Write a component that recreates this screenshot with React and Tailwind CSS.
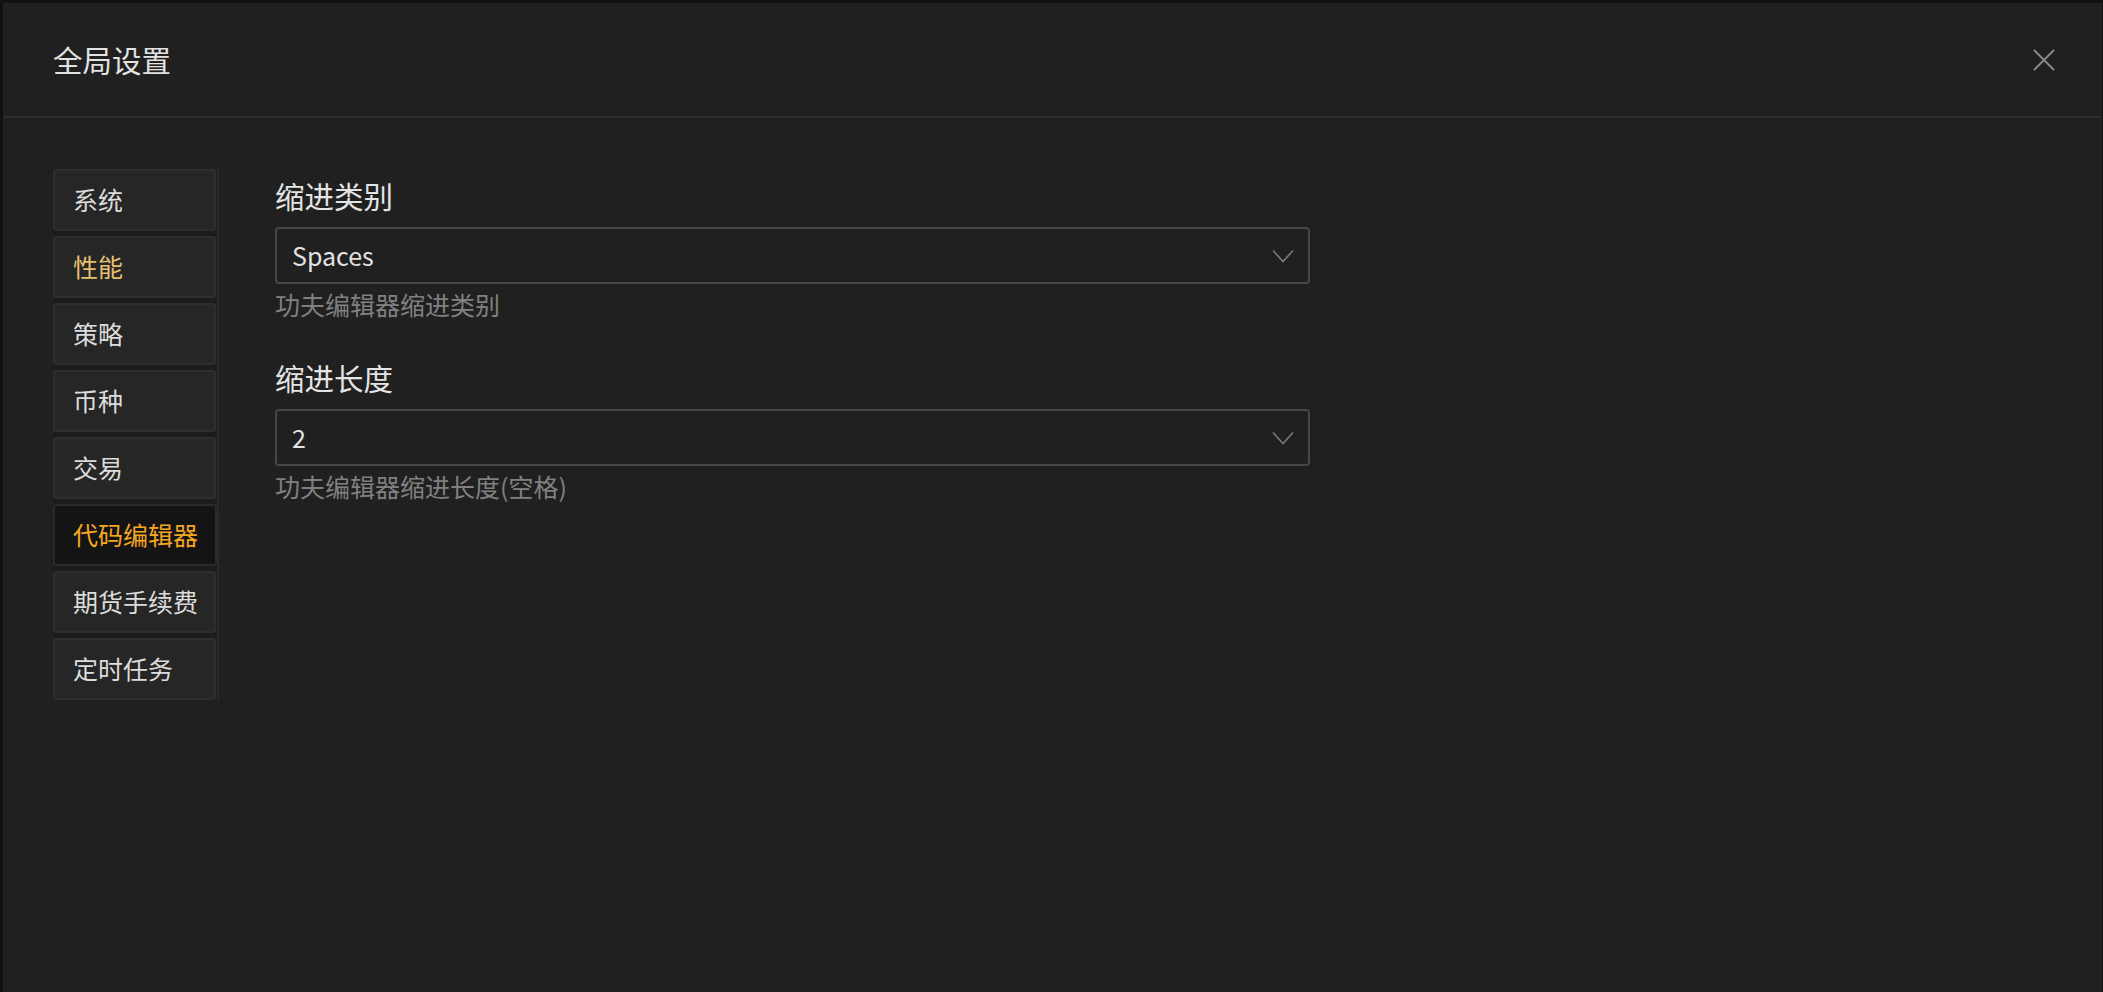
import { useState } from 'react';

const tabs = ['系统', '性能', '策略', '币种', '交易', '代码编辑器', '期货手续费', '定时任务'];

function Chevron() {
  return (
    <svg width="22" height="14" viewBox="0 0 22 14" fill="none" className="shrink-0">
      <path d="M1 1.5 L11 12.5 L21 1.5" stroke="#7a7a7a" strokeWidth="1.6" />
    </svg>
  );
}

function SelectField({ label, value, hint }) {
  return (
    <div className="flex flex-col">
      <div className="h-[40px] leading-[40px] text-[29.5px] text-[#e4e4e4]">{label}</div>
      <div className="mt-[12px] w-[1035px] h-[57px] border-2 border-[#474747] rounded-[4px] flex items-center justify-between pl-[15px] pr-[14px]">
        <span className="text-[25px] text-[#e2e2e2]">{value}</span>
        <Chevron />
      </div>
      <div className="mt-[4px] h-[32px] leading-[32px] text-[25px] text-[#808080]">{hint}</div>
    </div>
  );
}

export default function App() {
  const [active, setActive] = useState(5);

  return (
    <div
      className="w-[2103px] h-[992px] bg-[#111111] overflow-hidden pl-[3px] pt-[3px] pr-[1px]"
      style={{ fontFamily: '"Noto Sans CJK SC", "Noto Sans", sans-serif' }}
    >
      <div className="h-[989px] bg-[#202020] flex flex-col">
        {/* Header */}
        <div className="h-[113px] flex items-center justify-between pl-[50px] pr-[46px] border-b-2 border-[#2d2d2d] box-content">
          <span className="text-[29.5px] text-[#e2e2e2] leading-none">全局设置</span>
          <svg width="24" height="24" viewBox="0 0 24 24" fill="none">
            <path d="M2 2 L22 22 M22 2 L2 22" stroke="#8a8a8a" strokeWidth="1.8" />
          </svg>
        </div>

        {/* Body */}
        <div className="flex pl-[50px] pt-[51px]">
          <div className="flex flex-col gap-[5px] bg-[#1c1c1c] border-r-2 border-[#2a2a2a] self-start">
            {tabs.map((t, i) => (
              <button
                key={t}
                onClick={() => setActive(i)}
                className={
                  'w-[163px] h-[62px] text-left pl-[18px] text-[25px] rounded-[3px] border-2 ' +
                  (i === active
                    ? 'bg-[#141414] border-[#2a2a2a] text-[#f5a623] w-[164px]'
                    : i === 1
                    ? 'bg-[#262626] border-[#2e2e2e] text-[#e6c06e]'
                    : 'bg-[#262626] border-[#2e2e2e] text-[#dcdcdc]')
                }
              >
                {t}
              </button>
            ))}
          </div>

          <div className="flex flex-col pl-[56px] pt-[6px] gap-[37px]">
            <SelectField label="缩进类别" value="Spaces" hint="功夫编辑器缩进类别" />
            <SelectField label="缩进长度" value="2" hint="功夫编辑器缩进长度(空格)" />
          </div>
        </div>
      </div>
    </div>
  );
}
